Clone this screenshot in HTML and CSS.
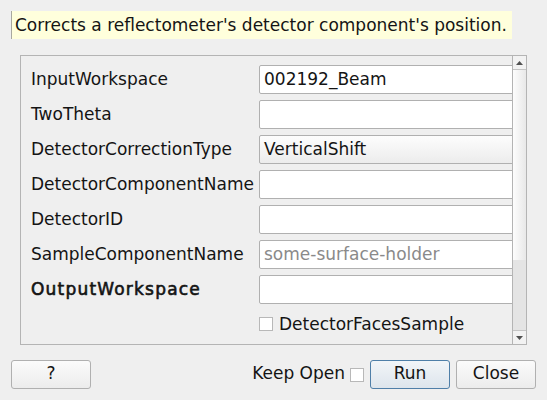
FILE: index.html
```html
<!DOCTYPE html>
<html>
<head>
<meta charset="utf-8">
<link rel="stylesheet" href="styles.css">
</head>
<body>
<div class="dialog">
  <div class="desc">Corrects a reflectometer's detector component's position.</div>
  <div class="frame">
    <div class="viewport">
      <div class="grid">
        <div class="label">InputWorkspace</div>
        <div class="field">002192_Beam</div>
        <div class="label">TwoTheta</div>
        <div class="field"></div>
        <div class="label">DetectorCorrectionType</div>
        <div class="field combo">VerticalShift</div>
        <div class="label">DetectorComponentName</div>
        <div class="field"></div>
        <div class="label">DetectorID</div>
        <div class="field"></div>
        <div class="label">SampleComponentName</div>
        <div class="field placeholder">some-surface-holder</div>
        <div class="label bold">OutputWorkspace</div>
        <div class="field"></div>
        <div class="label"></div>
        <div class="check-row"><span class="checkbox"></span><span>DetectorFacesSample</span></div>
        <div class="label"></div>
        <div class="field combo"></div>
      </div>
    </div>
    <div class="scrollbar">
      <div class="sb-btn up"><svg width="7" height="4" viewBox="0 0 7 4"><polygon points="0,4 7,4 3.5,0" fill="#505050"/></svg></div>
      <div class="sb-thumb"></div>
      <div class="sb-track"></div>
      <div class="sb-btn down"><svg width="7" height="4" viewBox="0 0 7 4"><polygon points="0,0 7,0 3.5,4" fill="#505050"/></svg></div>
    </div>
  </div>
  <div class="buttons">
    <button class="btn">?</button>
    <div class="spacer"></div>
    <span class="keep">Keep Open</span>
    <span class="checkbox keep-box"></span>
    <button class="btn default">Run</button>
    <button class="btn">Close</button>
  </div>
</div>
</body>
</html>
```
FILE: styles.css
```css
html, body {
  margin: 0;
  padding: 0;
  background: #efefef;
  width: 547px;
  height: 400px;
  overflow: hidden;
  font-family: "DejaVu Sans", sans-serif;
  font-size: 17px;
  color: #141414;
}
.dialog {
  display: flex;
  flex-direction: column;
  padding: 11px 0 0 11px;
}
.desc {
  height: 28px;
  line-height: 28px;
  background: #ffffdc;
  border-left: 1px solid #a8a8a0;
  padding-left: 3px;
  box-sizing: border-box;
  width: 501px;
  white-space: nowrap;
  overflow: hidden;
}
.frame {
  margin-top: 16px;
  margin-left: 9px;
  width: 507px;
  height: 290px;
  box-sizing: border-box;
  border: 1px solid #b4b4b4;
  display: flex;
  background: #efefef;
}
.viewport {
  flex: 1;
  overflow: hidden;
  padding: 9px 0 0 10px;
}
.grid {
  display: grid;
  grid-template-columns: 228px 270px;
  grid-auto-rows: 29px;
  row-gap: 6px;
  align-items: center;
}
.label {
  white-space: nowrap;
  height: 29px;
  line-height: 29px;
}
.bold {
  font-weight: normal;
  letter-spacing: 1.2px;
  -webkit-text-stroke: 0.6px #141414;
}
.field {
  height: 29px;
  box-sizing: border-box;
  border: 1px solid #b0b0b0;
  border-radius: 2px;
  background: #fff;
  padding-left: 4px;
  line-height: 27px;
  white-space: nowrap;
}
.combo {
  background: linear-gradient(#fdfdfd, #ececec);
}
.placeholder { color: #8a8a8a; }
.check-row {
  display: flex;
  align-items: center;
  gap: 6px;
  height: 27px;
  align-self: start;
}
.checkbox {
  display: inline-block;
  width: 14px;
  height: 14px;
  box-sizing: border-box;
  border: 1px solid #b8b8b8;
  background: #fff;
  flex: none;
}
.grid > .check-row + .label { margin-top: -2px; }
.scrollbar {
  width: 14px;
  border-left: 1px solid #b4b4b4;
  box-sizing: border-box;
  display: flex;
  flex-direction: column;
}
.sb-btn {
  height: 13px;
  display: flex;
  align-items: center;
  justify-content: center;
  background: #f2f2f2;
}
.sb-btn.up { border-bottom: 1px solid #c4c4c4; }
.sb-btn.down { border-top: 1px solid #c4c4c4; }
.sb-thumb {
  height: 190px;
  background: linear-gradient(to right, #fdfdfd, #e8e8e8);
}
.sb-track {
  flex: 1;
  background: #e4e4e4;
}
.buttons {
  display: flex;
  align-items: center;
  margin-top: 15px;
  width: 525px;
  gap: 6px;
}
.spacer { flex: 1; }
.btn {
  width: 80px;
  height: 29px;
  box-sizing: border-box;
  border: 1px solid #b0b0b0;
  border-radius: 3px;
  background: linear-gradient(#fbfbfb, #ececec);
  font-family: "DejaVu Sans", sans-serif;
  font-size: 17px;
  line-height: 25px;
  color: #141414;
  padding: 0 0 2px 0;
}
.btn.default {
  border-color: #4f7fa8;
  background: linear-gradient(#f2f5f8, #dde5ec);
}
.keep { margin-right: -1px; line-height: 25px; padding-bottom: 2px; }
```
